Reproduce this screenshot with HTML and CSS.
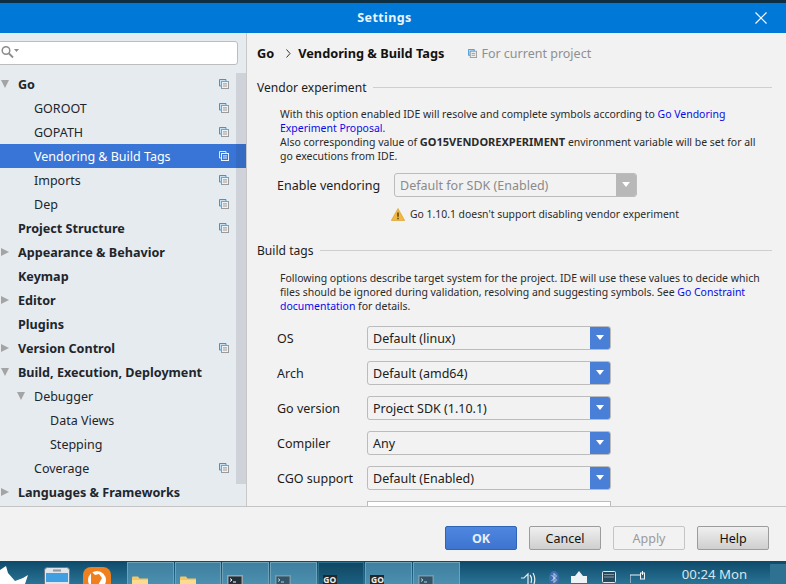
FILE: index.html
```html
<!DOCTYPE html>
<html lang="en">
<head>
<meta charset="utf-8">
<title>Settings</title>
<link rel="stylesheet" href="styles.css">
</head>
<body>
<svg class="defs" width="0" height="0" aria-hidden="true">
  <symbol id="copy" viewBox="0 0 10 10">
    <path d="M.5.5h6.500v2H2.500v4.500h-2z" fill="#c4e0f4" stroke="#3f97d0" stroke-width="1"/>
    <rect x="2.500" y="2.500" width="7" height="7" fill="#eef0f2" stroke="#9a9a9a" stroke-width="1"/>
    <path d="M4 4.900h4M4 7h4" stroke="#9a9a9a" stroke-width="1"/>
  </symbol>
  <symbol id="copyw" viewBox="0 0 10 10">
    <path d="M.5.5h6.500v2H2.500v4.500h-2z" fill="none" stroke="#dfe8f6" stroke-width="1"/>
    <rect x="2.500" y="2.500" width="7" height="7" fill="none" stroke="#eef2fa" stroke-width="1"/>
    <path d="M4 4.900h4M4 7h4" stroke="#eef2fa" stroke-width="1"/>
  </symbol>
  <symbol id="term" viewBox="0 0 16 14">
    <rect x=".75" y=".75" width="14.500" height="12.500" fill="#22303a" stroke="#9aa5ab" stroke-width="1.500"/>
    <path d="M3 3.500l2 1.500-2 1.500M6 7h3" stroke="#fff" stroke-width="1" fill="none"/>
  </symbol>
  <symbol id="folder" viewBox="0 0 16 12">
    <path d="M0 1.500q0-1 1-1h5l1.500 2H16v9.500H0z" fill="#f4c766"/>
    <path d="M0 4h16v8H0z" fill="#fbdc8e"/>
  </symbol>
</svg>

<div class="screen">
  <div class="strip"></div>
  <main class="dialog">
    <header class="titlebar">
      <h1 class="title">Settings</h1>
      <svg class="close" width="12" height="12" viewBox="0 0 12 12"><path d="M.5.5l11 11M11.500.5l-11 11" stroke="#fff" stroke-width="1.200"/></svg>
    </header>

    <div class="panes">
      <aside class="sidebar">
        <div class="search">
          <svg class="searchicon" width="18" height="14" viewBox="0 0 18 14"><circle cx="5" cy="5.500" r="3.800" fill="none" stroke="#8c8c8c" stroke-width="1.500"/><path d="M8 8.500l4 4" stroke="#8c8c8c" stroke-width="1.800"/><path d="M13 4h5l-2.500 3z" fill="#8c8c8c"/></svg>
        </div>
        <div class="tree">
          <div class="row bold"><i class="twist down"></i><span>Go</span><svg class="copy"><use href="#copy"/></svg></div>
          <div class="row l1"><i class="twist"></i><span>GOROOT</span><svg class="copy"><use href="#copy"/></svg></div>
          <div class="row l1"><i class="twist"></i><span>GOPATH</span><svg class="copy"><use href="#copy"/></svg></div>
          <div class="row l1 selected"><i class="twist"></i><span>Vendoring &amp; Build Tags</span><svg class="copy"><use href="#copyw"/></svg></div>
          <div class="row l1"><i class="twist"></i><span>Imports</span><svg class="copy"><use href="#copy"/></svg></div>
          <div class="row l1"><i class="twist"></i><span>Dep</span><svg class="copy"><use href="#copy"/></svg></div>
          <div class="row bold"><i class="twist"></i><span>Project Structure</span><svg class="copy"><use href="#copy"/></svg></div>
          <div class="row bold"><i class="twist right"></i><span>Appearance &amp; Behavior</span></div>
          <div class="row bold"><i class="twist"></i><span>Keymap</span></div>
          <div class="row bold"><i class="twist right"></i><span>Editor</span></div>
          <div class="row bold"><i class="twist"></i><span>Plugins</span></div>
          <div class="row bold"><i class="twist right"></i><span>Version Control</span><svg class="copy"><use href="#copy"/></svg></div>
          <div class="row bold"><i class="twist down"></i><span>Build, Execution, Deployment</span></div>
          <div class="row l1"><i class="twist down"></i><span>Debugger</span></div>
          <div class="row l2"><i class="twist"></i><span>Data Views</span></div>
          <div class="row l2"><i class="twist"></i><span>Stepping</span></div>
          <div class="row l1"><i class="twist"></i><span>Coverage</span><svg class="copy"><use href="#copy"/></svg></div>
          <div class="row bold"><i class="twist right"></i><span>Languages &amp; Frameworks</span></div>
        </div>
        <div class="scrollbar"></div>
      </aside>

      <section class="content">
        <div class="crumbs">
          <b>Go</b>
          <svg class="chev" width="5" height="9" viewBox="0 0 5 9"><path d="M.5.500l3.500 4-3.500 4" fill="none" stroke="#333" stroke-width="1"/></svg>
          <b>Vendoring &amp; Build Tags</b>
          <svg class="crumbcopy"><use href="#copy"/></svg>
          <span class="scope">For current project</span>
        </div>

        <div class="group g1"><span>Vendor experiment</span><hr></div>
        <p class="note">With this option enabled IDE will resolve and complete symbols according to <a href="#">Go Vendoring Experiment Proposal</a>.<br>Also corresponding value of <b>GO15VENDOREXPERIMENT</b> environment variable will be set for all go executions from IDE.</p>

        <div class="vendoring">
          <label>Enable vendoring</label>
          <div class="combo wide disabled"><span>Default for SDK (Enabled)</span><i class="drop"></i></div>
        </div>
        <div class="warn">
          <svg width="14" height="13" viewBox="0 0 14 13"><path d="M7 .5L13.700 12.500H.3z" fill="#f4b63f" stroke="#d79a24" stroke-width=".6"/><path d="M7 4.500v4.200M7 9.800v1.500" stroke="#4a3a10" stroke-width="1.400"/></svg>
          <span>Go 1.10.1 doesn't support disabling vendor experiment</span>
        </div>

        <div class="group g2"><span>Build tags</span><hr></div>
        <p class="note n2">Following options describe target system for the project. IDE will use these values to decide which files should be ignored during validation, resolving and suggesting symbols. See <a href="#">Go Constraint documentation</a> for details.</p>

        <div class="form">
          <label>OS</label><div class="combo"><span>Default (linux)</span><i class="drop"></i></div>
          <label>Arch</label><div class="combo"><span>Default (amd64)</span><i class="drop"></i></div>
          <label>Go version</label><div class="combo"><span>Project SDK (1.10.1)</span><i class="drop"></i></div>
          <label>Compiler</label><div class="combo"><span>Any</span><i class="drop"></i></div>
          <label>CGO support</label><div class="combo"><span>Default (Enabled)</span><i class="drop"></i></div>
          <label></label><div class="field"></div>
        </div>
      </section>
    </div>

    <footer class="buttons">
      <button class="btn primary">OK</button>
      <button class="btn">Cancel</button>
      <button class="btn off">Apply</button>
      <button class="btn">Help</button>
    </footer>
  </main>

  <nav class="taskbar">
    <svg class="bird" width="29" height="19" viewBox="0 0 29 19"><path d="M0 5L6 1l2 7 7 8 8-3 5-3-3 9H0z" fill="#fff"/></svg>
    <svg class="cabinet" width="26" height="19" viewBox="0 0 26 19"><rect x=".5" y=".5" width="25" height="22" rx="3" fill="#dfe5ea" stroke="#6d7a84"/><rect x="2" y="6" width="22" height="9" fill="#3f9fe0"/><rect x="9" y="2.500" width="8" height="2" fill="#8a98a2"/></svg>
    <svg class="fox" width="28" height="19" viewBox="0 0 28 19"><rect width="28" height="28" rx="8" fill="#f0801d"/><circle cx="14" cy="13" r="9" fill="#fff"/><path d="M8 4l4 4 4-1 3 4-5 9-6-3z" fill="#f0801d"/></svg>
    <div class="tiles">
      <div class="tile"><svg class="ti"><use href="#folder"/></svg></div>
      <div class="tile"><svg class="ti"><use href="#folder"/></svg></div>
      <div class="tile"><svg class="ti"><use href="#term"/></svg></div>
      <div class="tile dim"><svg class="ti"><use href="#term"/></svg></div>
      <div class="tile active"><span class="go">GO</span></div>
      <div class="tile"><span class="go">GO</span></div>
      <div class="tile dim"><svg class="ti"><use href="#term"/></svg></div>
    </div>
    <div class="tray">
      <svg class="t-sound" width="16" height="15" viewBox="0 0 16 15"><path d="M1 7h3l4-4v12M10 4q2.500 3 1 8M13 2q3 5 1 11" fill="none" stroke="#e6eef2" stroke-width="1.200"/></svg>
      <svg class="t-bt" width="10" height="14" viewBox="0 0 10 14"><ellipse cx="5" cy="7" rx="5" ry="7" fill="#3f6fb0"/><path d="M2.500 4l5 5-2.500 2.500v-9L7.500 5l-5 5" fill="none" stroke="#dfe8f2" stroke-width=".8"/></svg>
      <svg class="t-net" width="16" height="12" viewBox="0 0 16 12"><path d="M8 0l4 5h4v7H0V5h4z" fill="#eef3f6"/></svg>
      <svg class="t-kb" width="14" height="12" viewBox="0 0 14 12"><rect x=".5" y=".5" width="13" height="11" rx="1" fill="#27495e" stroke="#e0e8ee"/><path d="M2.500 3.500h9M2.500 6h9" stroke="#e0e8ee" stroke-dasharray="1 1"/></svg>
      <svg class="t-usb" width="16" height="12" viewBox="0 0 16 12"><path d="M0 12V4h10" fill="none" stroke="#eef3f6" stroke-width="1"/><rect x="10.500" y="2" width="4" height="6" fill="none" stroke="#eef3f6"/><path d="M12.500 0v4" stroke="#eef3f6"/></svg>
      <time class="clock">00:24 Mon</time>
    </div>
    <div class="corner"></div>
  </nav>
</div>
</body>
</html>
```

FILE: styles.css
```css
* { box-sizing: border-box; }
html, body { margin: 0; height: 100%; overflow: hidden; }
body { font-family: "Noto Sans", sans-serif; font-size: 12.5px; color: #1c1c1c; background: #0f4c6b; }
.defs { position: absolute; }
.screen { display: flex; flex-direction: column; width: 786px; height: 584px; overflow: hidden; }
.strip { flex: none; height: 3px; background: #0d2f43; }

.dialog { flex: none; height: 558px; display: flex; flex-direction: column; background: #f2f2f2; }
.titlebar { flex: none; height: 30px; background: #0078d7; display: flex; align-items: center; justify-content: center; position: relative; }
.title { margin: 0 17px 1px 0; font-size: 12.5px; font-weight: 700; color: #eaf4fc; letter-spacing: .4px; }
.close { position: absolute; left: 755px; top: 9px; }

.panes { flex: none; height: 474px; display: flex; border-bottom: 1px solid #c4c4c4; overflow: hidden; }
.sidebar { flex: none; width: 247px; background: #e6ebf0; border-right: 1px solid #c8c8c8; position: relative; padding-top: 8px; }
.search { width: 243px; height: 24px; margin-left: -5px; background: #fff; border: 1px solid #bdbdbd; border-radius: 3px; padding: 3px 0 0 5px; line-height: 0; }
.tree { margin-top: 7px; }
.row { height: 24px; display: flex; align-items: center; white-space: nowrap; color: #20262c; }
.row.bold { font-weight: 700; font-size: 12.6px; }
.row.l1 { padding-left: 16px; }
.row.l2 { padding-left: 32px; }
.row.selected { background: #3875d7; color: #fff; }
.twist { flex: none; width: 18px; height: 8px; position: relative; }
.twist.down::before { content: ""; position: absolute; left: 1px; top: 0; border-left: 4px solid transparent; border-right: 4px solid transparent; border-top: 8px solid #a4a4a4; }
.twist.right::before { content: ""; position: absolute; left: 1px; top: 0; border-top: 4px solid transparent; border-bottom: 4px solid transparent; border-left: 8px solid #a4a4a4; }
.copy { width: 10px; height: 10px; margin-left: auto; margin-right: 17px; flex: none; }
.scrollbar { position: absolute; left: 236px; top: 40px; width: 10px; height: 411px; background: rgba(40, 45, 60, .12); }

.content { flex: 1; min-width: 0; padding: 0 14px 0 10px; overflow: hidden; }
.crumbs { height: 20px; margin-top: 10px; display: flex; align-items: center; font-size: 12.75px; color: #111; white-space: nowrap; }
.chev { margin: 0 7px 0 12px; }
.crumbcopy { width: 9px; height: 9px; margin: 0 4px 0 24px; }
.scope { color: #8f8f8f; font-size: 12.5px; }

.group { display: flex; align-items: center; height: 18px; font-size: 12.1px; white-space: nowrap; }
.group hr { flex: 1; height: 1px; margin: 0 0 0 6px; border: 0; background: #cfcfcf; }
.g1 { margin-top: 15px; }
.g2 { margin-top: 18px; }

.note { margin: 11px 0 0 23px; font-size: 10.47px; line-height: 14px; color: #2a2a2a; width: 485px; }
.note b { font-size: 11px; }
.note.n2 { margin-top: 12px; }
.note a { color: #0a0ae6; text-decoration: none; }

.vendoring { display: flex; align-items: center; margin: 10px 0 0 20px; gap: 14px; }
.combo { width: 244px; height: 24px; background: #f2f2f2; border: 1px solid #bcbcbc; border-radius: 3px; display: flex; align-items: center; justify-content: space-between; padding-left: 5px; color: #202020; overflow: hidden; }
.combo.wide { width: 243px; }
.combo.disabled { color: #8a8a8a; }
.drop { flex: none; width: 20px; height: 24px; background: #4a7fd8; position: relative; }
.disabled .drop { background: #b8b8b8; }
.drop::after { content: ""; position: absolute; left: 6px; top: 9px; border-left: 4px solid transparent; border-right: 4px solid transparent; border-top: 5px solid #fff; }

.warn { display: flex; align-items: center; gap: 5px; margin: 8px 0 0 134px; font-size: 10.4px; height: 18px; color: #2a2a2a; white-space: nowrap; }

.form { display: grid; grid-template-columns: 90px 244px; grid-auto-rows: 24px; row-gap: 11px; margin: 13px 0 0 20px; align-items: center; }
.field { height: 24px; background: #fff; border: 1px solid #bcbcbc; }

.buttons { flex: none; height: 53px; display: flex; justify-content: flex-end; gap: 12px; padding: 19px 17px 0 0; }
.btn { width: 72px; height: 24px; padding: 0; font: 12.5px "Noto Sans", sans-serif; color: #111; border: 1px solid #9c9c9c; border-radius: 2px; background: linear-gradient(#f0f0f0, #cfcfcf); }
.btn.primary { background: linear-gradient(#4f86e0, #3c74cf); border-color: #2f63b5; color: #e8eefa; font-weight: 700; }
.btn.off { background: #f2f2f2; border-color: #c4c4c4; color: #9a9a9a; }

.taskbar { flex: none; height: 23px; display: flex; align-items: flex-start; background: linear-gradient(#0d4a6a, #2a7395); overflow: hidden; }
.bird { flex: none; margin-top: 4px; }
.cabinet { flex: none; margin: 6px 0 0 15px; }
.fox { flex: none; margin: 6px 0 0 13px; }
.tiles { flex: none; display: flex; gap: 1px; margin: 1px 0 0 16px; }
.tile { width: 46.7px; height: 22px; border: 1px solid #6ea2b8; border-bottom: 0; background: linear-gradient(#3f7f9f, #4c8fae); padding: 12px 0 0 4px; }
.tile.active { background: linear-gradient(#0f4763, #1c5f80); border-color: #2c6f8d; }
.ti { width: 16px; height: 14px; display: block; }
.dim .ti { opacity: .6; }
.go { display: block; width: 14px; height: 9px; background: #262626; color: #eee; font-size: 8.5px; font-weight: 700; line-height: 9px; text-align: center; }
.tray { flex: 1; position: relative; height: 23px; }
.tray svg { position: absolute; top: 10px; }
.t-sound { left: 60px; }
.t-bt { left: 89px; }
.t-net { left: 111px; }
.t-kb { left: 142px; }
.t-usb { left: 170px; }
.clock { position: absolute; left: 222px; top: 5px; color: #d6e6ee; font-size: 13.2px; line-height: 17px; white-space: nowrap; }
.corner { flex: none; width: 16px; height: 20px; margin-top: 3px; background: #2f7191; }
```
